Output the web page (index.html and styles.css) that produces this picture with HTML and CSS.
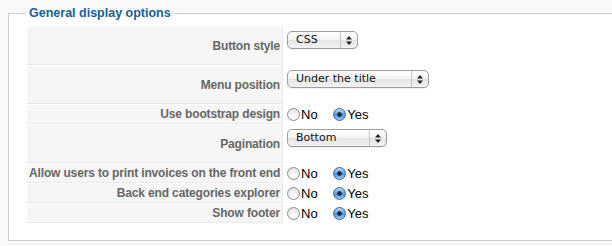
FILE: index.html
```html
<!DOCTYPE html>
<html lang="en">
<head>
  <meta charset="UTF-8" />
  <title>General display options</title>
  <link rel="stylesheet" href="styles.css">
</head>
<body>
  <fieldset class="adminform">
    <legend>General display options</legend>
    <table class="admintable">
      <tr class="row-select">
        <td class="key">Button style</td>
        <td class="field">
          <span class="select w-css"><span class="value">CSS</span><span class="arrows"><svg width="6" height="9" viewBox="0 0 6 9"><path d="M3 0L6 3.5H0Z M3 9L0 5.5H6Z" fill="#222"/></svg></span></span>
        </td>
      </tr>
      <tr class="row-select">
        <td class="key">Menu position</td>
        <td class="field">
          <span class="select w-menu"><span class="value">Under the title</span><span class="arrows"><svg width="6" height="9" viewBox="0 0 6 9"><path d="M3 0L6 3.5H0Z M3 9L0 5.5H6Z" fill="#222"/></svg></span></span>
        </td>
      </tr>
      <tr>
        <td class="key">Use bootstrap design</td>
        <td class="field">
          <input type="radio" name="bootstrap" id="bs0"><label for="bs0">No</label>
          <input type="radio" name="bootstrap" id="bs1" checked><label for="bs1">Yes</label>
        </td>
      </tr>
      <tr class="row-select">
        <td class="key">Pagination</td>
        <td class="field">
          <span class="select w-page"><span class="value">Bottom</span><span class="arrows"><svg width="6" height="9" viewBox="0 0 6 9"><path d="M3 0L6 3.5H0Z M3 9L0 5.5H6Z" fill="#222"/></svg></span></span>
        </td>
      </tr>
      <tr>
        <td class="key">Allow users to print invoices on the front end</td>
        <td class="field">
          <input type="radio" name="invoices" id="inv0"><label for="inv0">No</label>
          <input type="radio" name="invoices" id="inv1" checked><label for="inv1">Yes</label>
        </td>
      </tr>
      <tr>
        <td class="key">Back end categories explorer</td>
        <td class="field">
          <input type="radio" name="explorer" id="exp0"><label for="exp0">No</label>
          <input type="radio" name="explorer" id="exp1" checked><label for="exp1">Yes</label>
        </td>
      </tr>
      <tr>
        <td class="key">Show footer</td>
        <td class="field">
          <input type="radio" name="footer" id="ft0"><label for="ft0">No</label>
          <input type="radio" name="footer" id="ft1" checked><label for="ft1">Yes</label>
        </td>
      </tr>
    </table>
  </fieldset>
</body>
</html>
```

FILE: styles.css
```css
body {
  margin: 0;
  background: #f9f9f9;
  font-family: "Liberation Sans", Arial, sans-serif;
  overflow: hidden;
}
.adminform {
  margin: 5px -30px 0 8px;
  padding: 5px 0 16px 17px;
  border: 1px solid #ccc;
  background: #fff;
}
.adminform legend {
  padding: 0 4px 0 3px;
  color: #146295;
  font-size: 12.5px;
  font-weight: bold;
  line-height: 16px;
}
.admintable {
  border-spacing: 1px;
}
.admintable td {
  padding: 2px 3px;
}
.admintable td.key {
  width: 251px;
  max-width: 251px;
  padding: 2px;
  background: #f6f6f6;
  border-bottom: 1px solid #e9e9e9;
  border-right: 1px solid #e9e9e9;
  color: #666;
  font-size: 12px;
  font-weight: bold;
  text-align: right;
  vertical-align: middle;
  line-height: 14px;
  white-space: nowrap;
  letter-spacing: -0.15px;
}
.admintable td.field {
  vertical-align: top;
  line-height: 15px;
  font-size: 13px;
  color: #000;
}
.select {
  display: inline-flex;
  height: 16px;
  margin: 2px 0 14px;
  border: 1px solid #9c9c9c;
  border-radius: 5px;
  background: linear-gradient(#fff, #f3f3f3 50%, #e4e4e4 51%, #f2f2f2);
  box-shadow: 0 1px 0 rgba(0,0,0,0.05);
  font-family: "DejaVu Sans", sans-serif;
  font-size: 11px;
  line-height: 16px;
  color: #111;
  vertical-align: top;
}
.select .value {
  flex: 1;
  padding-left: 8px;
}
.select .arrows {
  width: 16px;
  display: flex;
  align-items: center;
  justify-content: center;
  border-left: 1px solid #c4c4c4;
}
.w-css { width: 69px; }
.w-menu { width: 140px; }
.w-page { width: 98px; }
.field input[type=radio] {
  appearance: none;
  -webkit-appearance: none;
  width: 13px;
  height: 13px;
  margin: 0 1px 0 0;
  border: 1px solid #8d8d8d;
  border-radius: 50%;
  background: radial-gradient(circle at 50% 75%, #fff, #ececec 60%, #dcdcdc);
  vertical-align: -2px;
}
.field input[type=radio]:checked {
  border-color: #3b6aa8;
  background: radial-gradient(circle, #1b2a3c 0 2px, transparent 2.5px), linear-gradient(#b9d8f6, #5c9be0 50%, #4a8ad8 51%, #9ccaf5);
}
.field label {
  margin-right: 12px;
}
```
